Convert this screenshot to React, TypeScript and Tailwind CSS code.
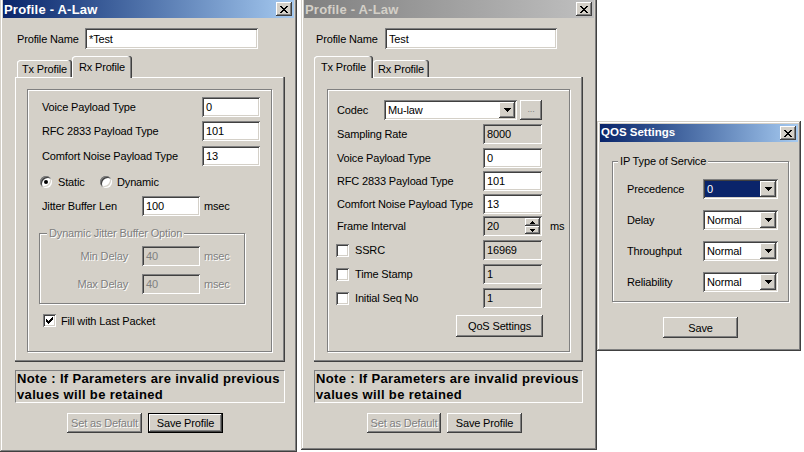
import React from "react";

const raised =
  "shadow-[inset_-1px_-1px_#404040,inset_1px_1px_#ffffff,inset_-2px_-2px_#808080,inset_2px_2px_#d4d0c8]";
const sunken =
  "shadow-[inset_1px_1px_#808080,inset_-1px_-1px_#ffffff,inset_2px_2px_#404040,inset_-2px_-2px_#d4d0c8]";
const frame =
  "shadow-[inset_-1px_-1px_#404040,inset_1px_1px_#d4d0c8,inset_-2px_-2px_#808080,inset_2px_2px_#ffffff]";
const etched = "border border-[#808080] shadow-[inset_1px_1px_#ffffff,1px_1px_#ffffff]";
const disabledText = "text-[#808080] [text-shadow:1px_1px_0_#ffffff]";

function Px({ rects, w, h }: { rects: number[][]; w: number; h: number }) {
  return (
    <svg width={w} height={h} viewBox={`0 0 ${w} ${h}`} shapeRendering="crispEdges" className="block">
      {rects.map(([x, y, rw, rh], i) => (
        <rect key={i} x={x} y={y} width={rw} height={rh} fill="currentColor" />
      ))}
    </svg>
  );
}

const closeRects = [
  [0, 0, 2, 1], [6, 0, 2, 1], [1, 1, 2, 1], [5, 1, 2, 1], [2, 2, 4, 1], [3, 3, 2, 1],
  [2, 4, 4, 1], [1, 5, 2, 1], [5, 5, 2, 1], [0, 6, 2, 1], [6, 6, 2, 1],
];
const downRects = [[0, 0, 7, 1], [1, 1, 5, 1], [2, 2, 3, 1], [3, 3, 1, 1]];
const smallUp = [[2, 0, 1, 1], [1, 1, 3, 1], [0, 2, 5, 1]];
const smallDown = [[0, 0, 5, 1], [1, 1, 3, 1], [2, 2, 1, 1]];
const checkRects = [
  [6, 0, 1, 1], [5, 1, 2, 1], [0, 2, 1, 1], [4, 2, 3, 1], [0, 3, 2, 1], [3, 3, 3, 1],
  [0, 4, 5, 1], [1, 5, 3, 1], [2, 6, 1, 1],
];

function CloseBtn() {
  return (
    <div className={`w-[16px] h-[14px] bg-[#d4d0c8] text-black flex items-center justify-center ${raised}`}>
      <Px rects={closeRects} w={8} h={7} />
    </div>
  );
}

function TitleBar({ title, active, size }: { title: string; active?: boolean; size: string }) {
  return (
    <div
      className={`h-[18px] shrink-0 flex items-center justify-between pl-[1px] pr-[2px] ${
        active
          ? "bg-linear-to-r from-[#0a246a] to-[#a6caf0] text-white"
          : "bg-linear-to-r from-[#808080] to-[#c0c0c0] text-[#d4d0c8]"
      }`}
    >
      <span className={`${size} font-bold leading-none`}>{title}</span>
      <CloseBtn />
    </div>
  );
}

function Win({ cls, children }: { cls: string; children: React.ReactNode }) {
  return <div className={`absolute bg-[#d4d0c8] p-[3px] flex flex-col ${frame} ${cls}`}>{children}</div>;
}

function Field({ cls, value, gray, disabled }: { cls: string; value: string; gray?: boolean; disabled?: boolean }) {
  return (
    <div
      className={`${cls} shrink-0 flex items-center pl-[4px] ${gray || disabled ? "bg-[#d4d0c8]" : "bg-white"} ${
        disabled ? "text-[#808080]" : "text-black"
      } ${sunken}`}
    >
      {value}
    </div>
  );
}

function Combo({ cls, value, selected }: { cls: string; value: string; selected?: boolean }) {
  return (
    <div className={`${cls} shrink-0 h-[20px] bg-white p-[2px] flex ${sunken}`}>
      <div className={`flex-1 flex items-center pl-[2px] ${selected ? "bg-[#0a246a] text-white" : "text-black"}`}>
        {value}
      </div>
      <div className={`w-[16px] h-full bg-[#d4d0c8] text-black flex items-center justify-center ${raised}`}>
        <Px rects={downRects} w={7} h={4} />
      </div>
    </div>
  );
}

function Spin({ cls, value }: { cls: string; value: string }) {
  return (
    <div className={`${cls} shrink-0 h-[20px] bg-[#d4d0c8] p-[2px] flex ${sunken}`}>
      <div className="flex-1 flex items-center pl-[2px]">{value}</div>
      <div className="w-[15px] h-full flex flex-col">
        <div className={`flex-1 flex items-center justify-center text-black ${raised}`}>
          <Px rects={smallUp} w={5} h={3} />
        </div>
        <div className={`flex-1 flex items-center justify-center text-black ${raised}`}>
          <Px rects={smallDown} w={5} h={3} />
        </div>
      </div>
    </div>
  );
}

function Btn({ cls, label, disabled, def }: { cls: string; label: string; disabled?: boolean; def?: boolean }) {
  return (
    <div
      className={`${cls} shrink-0 bg-[#d4d0c8] flex items-center justify-center ${def ? "border border-black" : ""} ${raised} ${
        disabled ? disabledText : ""
      }`}
    >
      {label}
    </div>
  );
}

function Tab({ cls, label, selected }: { cls: string; label: string; selected?: boolean }) {
  return (
    <div
      className={`${cls} ${
        selected ? "h-[22px] mb-[-1px] relative z-10" : "h-[17px]"
      } shrink-0 rounded-t-[3px] bg-[#d4d0c8] flex items-center justify-center shadow-[inset_-1px_0_#404040,inset_-2px_0_#808080,inset_1px_1px_#ffffff]`}
    >
      {label}
    </div>
  );
}

function Check({ checked }: { checked?: boolean }) {
  return (
    <div className={`w-[13px] h-[13px] shrink-0 bg-white text-black flex items-center justify-center ${sunken}`}>
      {checked && <Px rects={checkRects} w={7} h={7} />}
    </div>
  );
}

function Radio({ checked }: { checked?: boolean }) {
  return (
    <div
      className={`w-[12px] h-[12px] shrink-0 rounded-full bg-white flex items-center justify-center shadow-[inset_1px_1px_#808080,inset_-1px_-1px_#ffffff,inset_2px_2px_#404040,inset_-2px_-2px_#d4d0c8]`}
    >
      {checked && <div className="w-[4px] h-[4px] rounded-full bg-black" />}
    </div>
  );
}

function Note({ cls }: { cls: string }) {
  return (
    <div
      className={`${cls} h-[33px] shrink-0 border border-t-[#808080] border-l-[#808080] border-r-white border-b-white pl-[1px] font-bold text-[13px] leading-[16px] tracking-[0.35px]`}
    >
      <div>Note : If Parameters are invalid previous</div>
      <div>values will be retained</div>
    </div>
  );
}

function Row({ cls, children }: { cls: string; children: React.ReactNode }) {
  return <div className={`flex items-center h-[20px] ${cls}`}>{children}</div>;
}

function LeftWindow() {
  return (
    <Win cls="left-0 top-[-3px] w-[297px] h-[455px]">
      <TitleBar title="Profile - A-Law" active size="text-[13px] tracking-[0.2px]" />
      <div className="mt-[10px] ml-[14px] flex items-center h-[21px]">
        <span className="w-[68px] shrink-0">Profile Name</span>
        <Field cls="w-[173px] h-[21px]" value="*Test" />
      </div>
      <div className="mt-[7px] ml-[12px] flex items-end h-[21px]">
        <Tab cls="ml-[2px] w-[55px]" label="Tx Profile" />
        <Tab cls="w-[60px]" label="Rx Profile" selected />
      </div>
      <div
        className={`ml-[12px] w-[270px] h-[285px] shrink-0 pt-[12px] pl-[12px] shadow-[inset_-1px_-1px_#404040,inset_-2px_-2px_#808080,inset_1px_1px_#ffffff]`}
      >
        <div className={`w-[245px] h-[263px] ${etched} flex flex-col`}>
          <Row cls="mt-[7px] ml-[14px]">
            <span className="w-[160px] shrink-0">Voice Payload Type</span>
            <Field cls="w-[58px] h-[20px]" value="0" />
          </Row>
          <Row cls="mt-[4px] ml-[14px]">
            <span className="w-[160px] shrink-0">RFC 2833 Payload Type</span>
            <Field cls="w-[58px] h-[20px]" value="101" />
          </Row>
          <Row cls="mt-[5px] ml-[14px]">
            <span className="w-[160px] shrink-0">Comfort Noise Payload Type</span>
            <Field cls="w-[58px] h-[20px]" value="13" />
          </Row>
          <div className="mt-[10px] ml-[12px] h-[12px] flex items-center">
            <div className="w-[60px] flex items-center gap-[6px]">
              <Radio checked />
              <span>Static</span>
            </div>
            <div className="flex items-center gap-[5px]">
              <Radio />
              <span>Dynamic</span>
            </div>
          </div>
          <Row cls="mt-[8px] ml-[14px]">
            <span className="w-[100px] shrink-0">Jitter Buffer Len</span>
            <Field cls="w-[58px] h-[20px]" value="100" />
            <span className="ml-[4px]">msec</span>
          </Row>
          <div className={`relative mt-[17px] ml-[11px] w-[206px] h-[71px] shrink-0 ${etched} flex flex-col`}>
            <span className={`absolute top-[-8px] left-[7px] px-[2px] leading-[14px] bg-[#d4d0c8] ${disabledText}`}>
              Dynamic Jitter Buffer Option
            </span>
            <Row cls="mt-[12px]">
              <span className={`w-[102px] shrink-0 text-right pr-[14px] ${disabledText}`}>Min Delay</span>
              <Field cls="w-[58px] h-[20px]" value="40" disabled />
              <span className={`ml-[4px] ${disabledText}`}>msec</span>
            </Row>
            <Row cls="mt-[8px]">
              <span className={`w-[102px] shrink-0 text-right pr-[14px] ${disabledText}`}>Max Delay</span>
              <Field cls="w-[58px] h-[20px]" value="40" disabled />
              <span className={`ml-[4px] ${disabledText}`}>msec</span>
            </Row>
          </div>
          <div className="mt-[10px] ml-[15px] h-[13px] flex items-center gap-[5px]">
            <Check checked />
            <span>Fill with Last Packet</span>
          </div>
        </div>
      </div>
      <Note cls="mt-[8px] ml-[12px] w-[270px]" />
      <div className="mt-[10px] ml-[64px] flex gap-[6px]">
        <Btn cls="w-[75px] h-[20px]" label="Set as Default" disabled />
        <Btn cls="w-[75px] h-[20px]" label="Save Profile" def />
      </div>
    </Win>
  );
}

function MiddleWindow() {
  return (
    <Win cls="left-[301px] top-[-3px] w-[296px] h-[453px]">
      <TitleBar title="Profile - A-Law" size="text-[13px] tracking-[0.2px]" />
      <div className="mt-[10px] ml-[12px] flex items-center h-[21px]">
        <span className="w-[69px] shrink-0">Profile Name</span>
        <Field cls="w-[172px] h-[21px]" value="Test" />
      </div>
      <div className="mt-[7px] ml-[10px] flex items-end h-[21px]">
        <Tab cls="w-[59px]" label="Tx Profile" selected />
        <Tab cls="w-[56px]" label="Rx Profile" />
      </div>
      <div
        className={`ml-[10px] w-[269px] h-[285px] shrink-0 pt-[12px] pl-[13px] shadow-[inset_-1px_-1px_#404040,inset_-2px_-2px_#808080,inset_1px_1px_#ffffff]`}
      >
        <div className={`w-[243px] h-[263px] ${etched} flex flex-col`}>
          <Row cls="mt-[10px] ml-[9px]">
            <span className="w-[47px] shrink-0">Codec</span>
            <Combo cls="w-[133px]" value="Mu-law" />
            <Btn cls="ml-[3px] w-[22px] h-[20px] text-[9px] text-[#808080] items-end pb-[4px]" label="..." />
          </Row>
          <Row cls="mt-[4px] ml-[9px]">
            <span className="w-[146px] shrink-0">Sampling Rate</span>
            <Field cls="w-[59px] h-[20px]" value="8000" gray />
          </Row>
          <Row cls="mt-[4px] ml-[9px]">
            <span className="w-[146px] shrink-0">Voice Payload Type</span>
            <Field cls="w-[59px] h-[20px]" value="0" />
          </Row>
          <Row cls="mt-[3px] ml-[9px]">
            <span className="w-[146px] shrink-0">RFC 2833 Payload Type</span>
            <Field cls="w-[59px] h-[20px]" value="101" />
          </Row>
          <Row cls="mt-[3px] ml-[9px]">
            <span className="w-[146px] shrink-0">Comfort Noise Payload Type</span>
            <Field cls="w-[59px] h-[20px]" value="13" />
          </Row>
          <Row cls="mt-[2px] ml-[9px]">
            <span className="w-[146px] shrink-0">Frame Interval</span>
            <Spin cls="w-[59px]" value="20" />
            <span className="ml-[8px]">ms</span>
          </Row>
          <Row cls="mt-[4px] ml-[8px]">
            <Check />
            <span className="ml-[6px] w-[128px] shrink-0">SSRC</span>
            <Field cls="w-[59px] h-[20px]" value="16969" gray />
          </Row>
          <Row cls="mt-[4px] ml-[8px]">
            <Check />
            <span className="ml-[6px] w-[128px] shrink-0">Time Stamp</span>
            <Field cls="w-[59px] h-[20px]" value="1" gray />
          </Row>
          <Row cls="mt-[4px] ml-[8px]">
            <Check />
            <span className="ml-[6px] w-[128px] shrink-0">Initial Seq No</span>
            <Field cls="w-[59px] h-[20px]" value="1" gray />
          </Row>
          <div className="mt-[7px] ml-[128px] flex">
            <Btn cls="w-[87px] h-[22px]" label="QoS Settings" />
          </div>
        </div>
      </div>
      <Note cls="mt-[8px] ml-[10px] w-[269px]" />
      <div className="mt-[10px] ml-[63px] flex gap-[6px]">
        <Btn cls="w-[74px] h-[20px]" label="Set as Default" disabled />
        <Btn cls="w-[75px] h-[20px]" label="Save Profile" />
      </div>
    </Win>
  );
}

function QosWindow() {
  const rows = ["Delay", "Throughput", "Reliability"];
  return (
    <Win cls="left-[597px] top-[121px] w-[204px] h-[230px]">
      <TitleBar title="QOS Settings" active size="text-[11.5px] tracking-[0px]" />
      <div className={`relative mt-[19px] ml-[12px] w-[177px] h-[141px] shrink-0 ${etched} flex flex-col`}>
        <span className="absolute top-[-8px] left-[5px] px-[2px] leading-[14px] bg-[#d4d0c8]">IP Type of Service</span>
        <Row cls="mt-[17px] ml-[14px]">
          <span className="w-[76px] shrink-0">Precedence</span>
          <Combo cls="w-[75px]" value="0" selected />
        </Row>
        {rows.map((label) => (
          <Row key={label} cls="mt-[11px] ml-[14px]">
            <span className="w-[76px] shrink-0">{label}</span>
            <Combo cls="w-[75px]" value="Normal" />
          </Row>
        ))}
      </div>
      <div className="mt-[15px] ml-[63px] flex">
        <Btn cls="w-[75px] h-[21px]" label="Save" />
      </div>
    </Win>
  );
}

export default function App() {
  return (
    <div className="relative w-[804px] h-[452px] bg-white overflow-hidden [font-family:'Liberation_Sans',Arial,sans-serif] text-[11px] leading-[14px] text-black tracking-[-0.15px]">
      <LeftWindow />
      <MiddleWindow />
      <QosWindow />
    </div>
  );
}
